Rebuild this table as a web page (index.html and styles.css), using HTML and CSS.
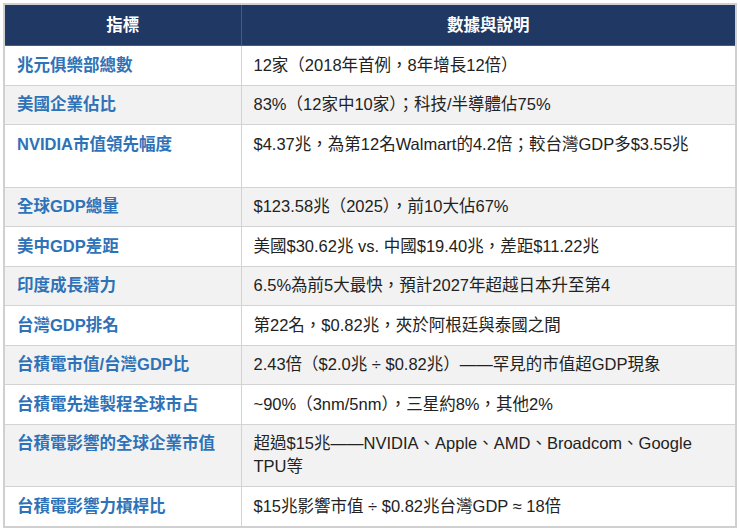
FILE: index.html
```html
<!DOCTYPE html>
<html lang="zh-Hant">
<head>
<meta charset="utf-8">
<title>兆元俱樂部</title>
<link rel="stylesheet" href="styles.css">
</head>
<body>
<table class="data">
  <colgroup><col class="c1"><col class="c2"></colgroup>
  <thead>
    <tr><th>指標</th><th>數據與說明</th></tr>
  </thead>
  <tbody>
    <tr><td class="k">兆元俱樂部總數</td><td>12家（2018年首例，8年增長12倍）</td></tr>
    <tr><td class="k">美國企業佔比</td><td>83%（12家中10家）；科技/半導體佔75%</td></tr>
    <tr class="tall"><td class="k">NVIDIA市值領先幅度</td><td>$4.37兆，為第12名Walmart的4.2倍；較台灣GDP多$3.55兆</td></tr>
    <tr><td class="k">全球GDP總量</td><td>$123.58兆（2025），前10大佔67%</td></tr>
    <tr><td class="k">美中GDP差距</td><td>美國$30.62兆 vs. 中國$19.40兆，差距$11.22兆</td></tr>
    <tr><td class="k">印度成長潛力</td><td>6.5%為前5大最快，預計2027年超越日本升至第4</td></tr>
    <tr><td class="k">台灣GDP排名</td><td>第22名，$0.82兆，夾於阿根廷與泰國之間</td></tr>
    <tr><td class="k">台積電市值/台灣GDP比</td><td>2.43倍（$2.0兆 ÷ $0.82兆）——罕見的市值超GDP現象</td></tr>
    <tr><td class="k">台積電先進製程全球市占</td><td>~90%（3nm/5nm），三星約8%，其他2%</td></tr>
    <tr><td class="k">台積電影響的全球企業市值</td><td>超過$15兆——NVIDIA、Apple、AMD、Broadcom、Google TPU等</td></tr>
    <tr><td class="k">台積電影響力槓桿比</td><td>$15兆影響市值 ÷ $0.82兆台灣GDP ≈ 18倍</td></tr>
  </tbody>
</table>
</body>
</html>
```
FILE: styles.css
```css
html, body {
  margin: 0;
  padding: 0;
  background: #ffffff;
}
body {
  padding: 3px;
  font-family: "Liberation Sans", "Noto Sans CJK TC", sans-serif;
  font-size: 16.5px;
  color: #222222;
}
.data {
  width: 734px;
  border-collapse: collapse;
  table-layout: fixed;
  border: 2px solid #d0d0d0;
}
.c1 { width: 237px; }
.data th {
  background: #1f3864;
  color: #ffffff;
  font-weight: bold;
  text-align: center;
  height: 40px;
  padding: 0 12px;
  line-height: 23px;
  border: 1px solid #3a5d92;
}
.data td {
  padding: 7.5px 12px 8px;
  line-height: 23px;
  height: 23px;
  vertical-align: top;
  border: 1px solid #d3d3d3;
  text-align: left;
  white-space: normal;
}
.data tbody tr:nth-child(even) td {
  background: #f2f2f2;
}
.data td.k {
  color: #2e72b8;
  font-weight: bold;
}
.data tr.tall td {
  height: 46px;
}
```
